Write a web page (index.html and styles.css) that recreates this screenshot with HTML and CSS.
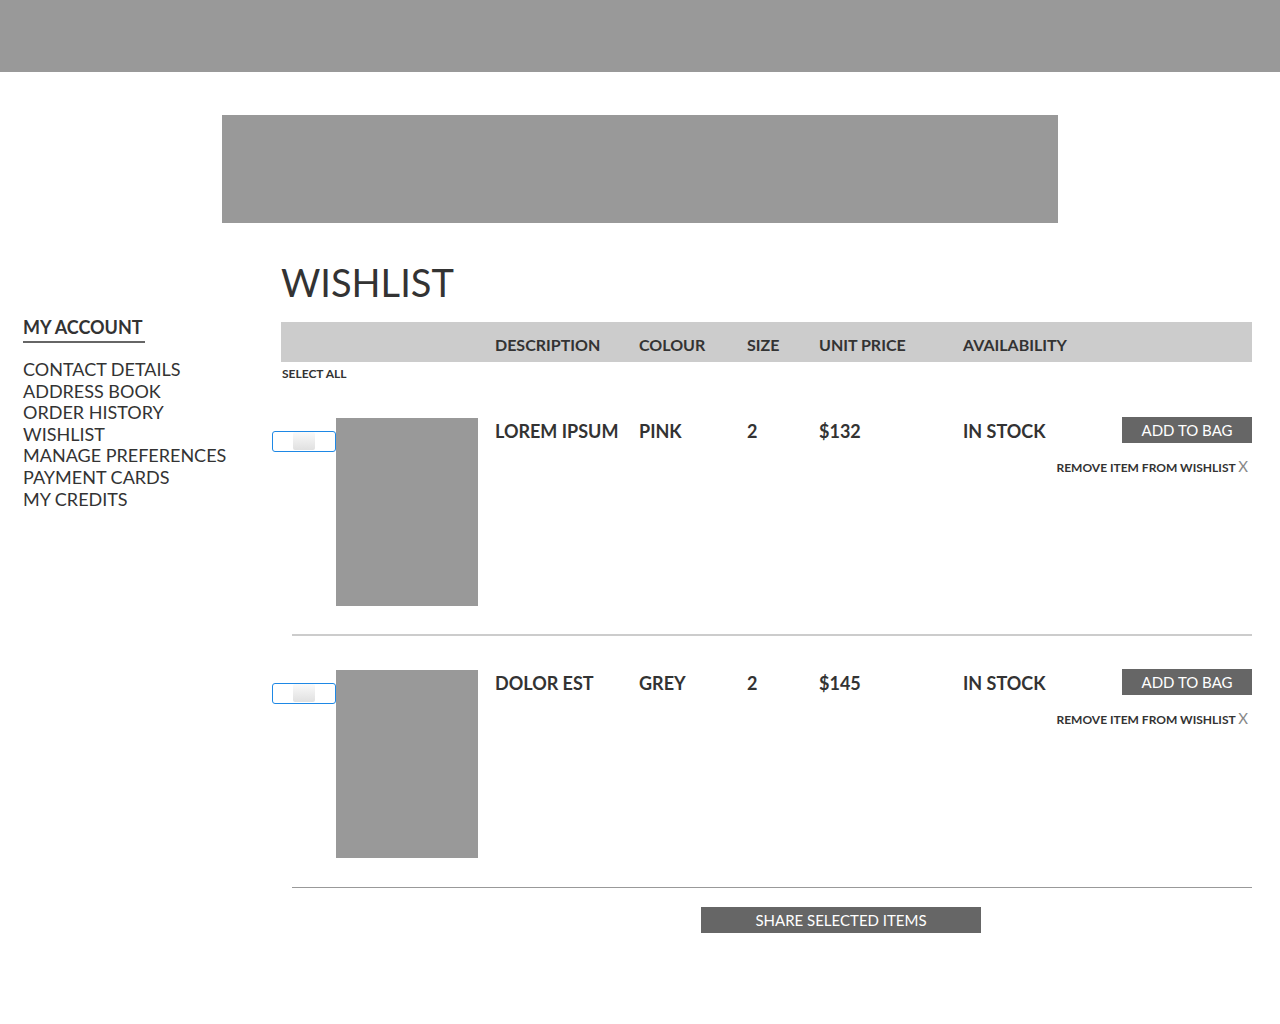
FILE: index.html
```html
<!DOCTYPE html>
<html>
<head>
<meta charset="utf-8">
<link rel="stylesheet" href="styles.css">
</head>
<body>
<header class="topbar"></header>
<div class="banner"></div>
<div class="layout">
  <aside class="sidebar">
    <h2 class="side-title">MY ACCOUNT</h2>
    <ul class="side-menu">
      <li>CONTACT DETAILS</li>
      <li>ADDRESS BOOK</li>
      <li>ORDER HISTORY</li>
      <li>WISHLIST</li>
      <li>MANAGE PREFERENCES</li>
      <li>PAYMENT CARDS</li>
      <li>MY CREDITS</li>
    </ul>
  </aside>
  <main class="main">
    <h1 class="title">WISHLIST</h1>
    <div class="thead">
      <span></span>
      <span>DESCRIPTION</span>
      <span>COLOUR</span>
      <span>SIZE</span>
      <span>UNIT PRICE</span>
      <span>AVAILABILITY</span>
    </div>
    <div class="select-all">SELECT ALL</div>

    <div class="item first">
      <div class="check"><span class="knob"></span></div>
      <div class="thumb-cell"><div class="thumb"></div></div>
      <div class="cell">LOREM IPSUM</div>
      <div class="cell">PINK</div>
      <div class="cell">2</div>
      <div class="cell">$132</div>
      <div class="cell">IN STOCK</div>
      <div class="actions">
        <button class="btn">ADD TO BAG</button>
        <div class="remove">REMOVE ITEM FROM WISHLIST <span class="x">X</span></div>
      </div>
    </div>
    <hr class="sep sep-light">

    <div class="item second">
      <div class="check"><span class="knob"></span></div>
      <div class="thumb-cell"><div class="thumb"></div></div>
      <div class="cell">DOLOR EST</div>
      <div class="cell">GREY</div>
      <div class="cell">2</div>
      <div class="cell">$145</div>
      <div class="cell">IN STOCK</div>
      <div class="actions">
        <button class="btn">ADD TO BAG</button>
        <div class="remove">REMOVE ITEM FROM WISHLIST <span class="x">X</span></div>
      </div>
    </div>
    <hr class="sep sep-dark">

    <div class="share-row">
      <button class="btn share">SHARE SELECTED ITEMS</button>
    </div>
  </main>
</div>
</body>
</html>
```

FILE: styles.css
```css
* { box-sizing: border-box; }
body {
  margin: 0;
  font-family: Lato, "Open Sans", sans-serif;
  color: #333;
  background: #fff;
}
.topbar {
  height: 72px;
  background: #999;
}
.banner {
  width: 836px;
  height: 108px;
  margin: 43px 0 0 222px;
  background: #999;
}
.layout {
  display: grid;
  grid-template-columns: 281px 971px;
}
.sidebar {
  padding: 93px 0 0 23px;
}
.side-title {
  display: inline-block;
  margin: 0;
  font-size: 18px;
  font-weight: 700;
  line-height: 22px;
  padding-bottom: 3px;
  border-bottom: 2px solid #666;
  white-space: nowrap;
  padding-right: 2px;
}
.side-menu {
  list-style: none;
  margin: 16px 0 0;
  padding: 0;
  font-size: 18px;
  line-height: 21.6px;
}
.main {
  padding-top: 35px;
}
.title {
  margin: 0;
  font-size: 38px;
  font-weight: 400;
  line-height: 48px;
}
.thead {
  margin-top: 16px;
  height: 40px;
  background: #ccc;
  display: grid;
  grid-template-columns: 214px 144px 108px 72px 144px 1fr;
  align-items: center;
  font-size: 16px;
  font-weight: 700;
  padding-top: 4px;
}
.select-all {
  margin: 4px 0 0 1px;
  font-size: 12px;
  font-weight: 700;
  line-height: 16px;
}
.item {
  margin: 36px 0 0 -9px;
  display: grid;
  grid-template-columns: 64px 159px 144px 108px 72px 144px auto 1fr;
  align-items: start;
}
.item.second {
  margin-top: 34px;
}
.check {
  margin-top: 13px;
  width: 64px;
  height: 21px;
  border: 1.5px solid #1e88e5;
  border-radius: 3px;
  display: flex;
  justify-content: center;
}
.knob {
  width: 22px;
  height: 18px;
  background: linear-gradient(#fafafa, #e0e0e0);
  border-radius: 2px;
}
.thumb {
  width: 142px;
  height: 188px;
  background: #999;
}
.cell {
  font-size: 18px;
  font-weight: 700;
  line-height: 24px;
  margin-top: 1px;
}
.actions {
  display: flex;
  flex-direction: column;
  align-items: flex-end;
}
.btn {
  border: 0;
  background: #666;
  color: #fff;
  font-family: Lato, "Open Sans", sans-serif;
  font-size: 15px;
  height: 26px;
  padding: 0;
  width: 130px;
  margin-top: -1px;
}
.remove {
  margin-top: 15px;
  margin-right: 4px;
  font-size: 12px;
  font-weight: 700;
  line-height: 16px;
  white-space: nowrap;
}
.remove .x {
  color: #888;
  font-size: 15px;
  font-weight: 400;
}
.sep {
  margin: 0 0 0 11px;
  border: 0;
}
.sep-light {
  margin-top: 28px;
  border-top: 2px solid #ccc;
}
.sep-dark {
  margin-top: 29px;
  border-top: 1px solid #999;
}
.share-row {
  padding: 19px 0 0 420px;
}
.share {
  width: 280px;
  margin: 0;
}
```
